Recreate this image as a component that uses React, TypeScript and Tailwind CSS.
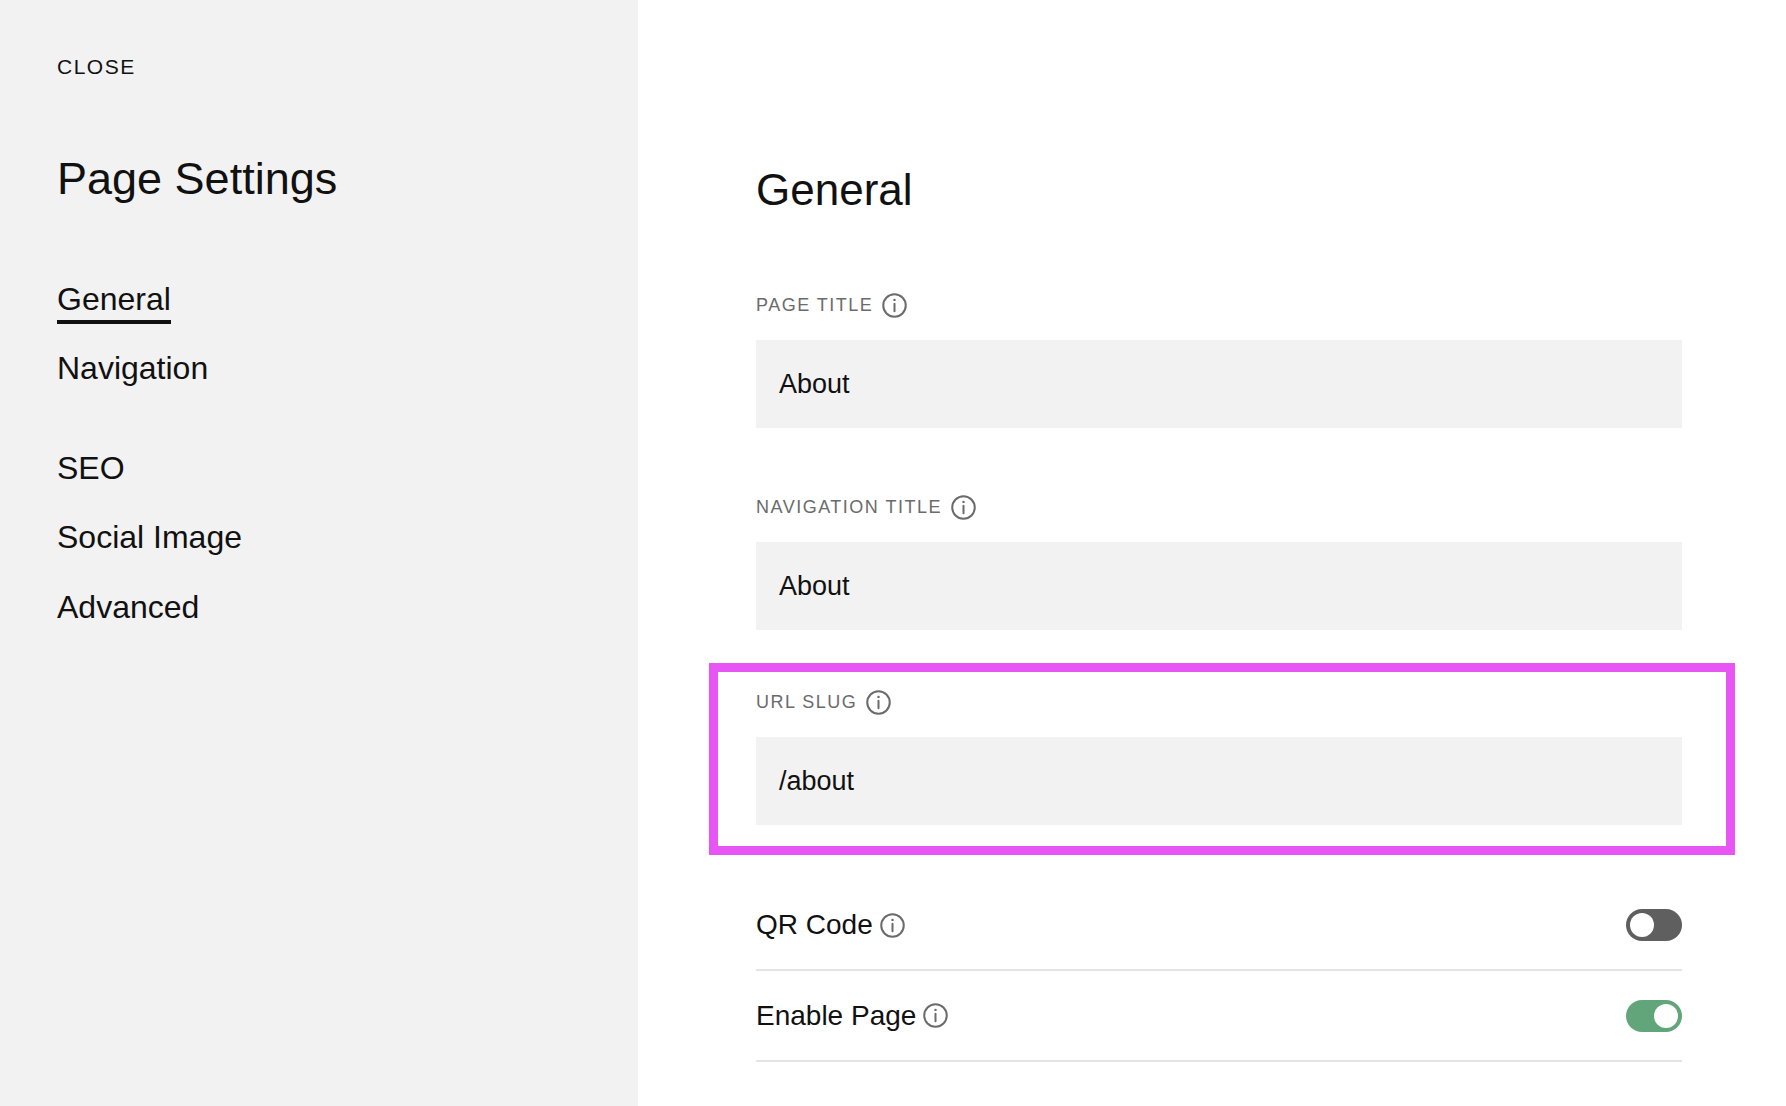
import React from "react";

const Info = ({ size = 27 }: { size?: number }) => (
  <svg width={size} height={size} viewBox="0 0 24 24" fill="none" stroke="#6b6b6b" strokeWidth="1.8">
    <circle cx="12" cy="12" r="10" />
    <line x1="12" y1="10.5" x2="12" y2="17" strokeLinecap="round" />
    <circle cx="12" cy="7" r="1.1" fill="#6b6b6b" stroke="none" />
  </svg>
);

const Field = ({ label, value }: { label: string; value: string }) => (
  <div>
    <div className="flex items-center gap-[8px] h-[30px] text-[18px] tracking-[1.5px] text-[#6b6b6b]">
      {label}
      <Info />
    </div>
    <div className="mt-[20px] h-[88px] bg-[#f2f2f2] flex items-center pl-[23px] text-[27px] text-[#111]">{value}</div>
  </div>
);

const Toggle = ({ on }: { on: boolean }) => (
  <div className={`w-[56px] h-[32px] rounded-full flex items-center px-[4px] ${on ? "bg-[#62a57b] justify-end" : "bg-[#5f5f5f] justify-start"}`}>
    <div className="w-[24px] h-[24px] rounded-full bg-white" />
  </div>
);

export default function App() {
  return (
    <div className="flex w-[1786px] h-[1106px] bg-white text-[#111]" style={{ fontFamily: '"Liberation Sans", Arial, sans-serif' }}>
      <div className="w-[638px] shrink-0 h-full bg-[#f2f2f2] pl-[57px] pt-[53px]">
        <div className="text-[21px] tracking-[1.5px] leading-[28px]">CLOSE</div>
        <div className="mt-[72px] text-[45px] leading-[52px]">Page Settings</div>
        <div className="mt-[75px] text-[32px] leading-[38px]">
          <div className="inline-block border-b-[4px] border-[#111] pb-[2px]">General</div>
          <div className="mt-[25px]">Navigation</div>
          <div className="mt-[62px]">SEO</div>
          <div className="mt-[31px]">Social Image</div>
          <div className="mt-[32px]">Advanced</div>
        </div>
      </div>
      <div className="pl-[118px] pt-[164px] w-[1044px]">
        <div className="text-[44px] leading-[52px]">General</div>
        <div className="mt-[74px]">
          <Field label="PAGE TITLE" value="About" />
        </div>
        <div className="mt-[64px]">
          <Field label="NAVIGATION TITLE" value="About" />
        </div>
        <div className="mt-[33px] -ml-[47px] w-[1026px] border-[9px] border-[#e855f5] pl-[38px] pr-[44px] pt-[15px] pb-[21px]">
          <Field label="URL SLUG" value="/about" />
        </div>
        <div className="mt-[26px]">
          <div className="flex items-center justify-between h-[90px] border-b-[2px] border-[#e4e4e4]">
            <div className="flex items-center gap-[6px] text-[28px]">QR Code <Info /></div>
            <Toggle on={false} />
          </div>
          <div className="flex items-center justify-between h-[91px] border-b-[2px] border-[#e4e4e4]">
            <div className="flex items-center gap-[6px] text-[28px]">Enable Page <Info /></div>
            <Toggle on={true} />
          </div>
        </div>
      </div>
    </div>
  );
}
